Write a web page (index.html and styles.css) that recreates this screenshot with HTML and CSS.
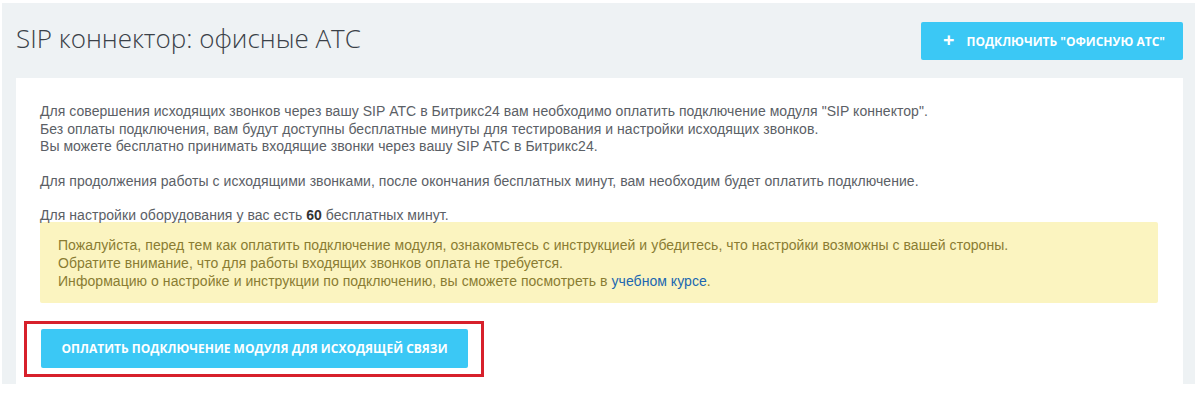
FILE: index.html
```html
<!DOCTYPE html>
<html lang="ru">
<head>
<meta charset="utf-8">
<link rel="stylesheet" href="styles.css">
</head>
<body>
<div class="page">
  <div class="header">
    <h1 class="title">SIP коннектор: офисные АТС</h1>
    <button class="btn btn-add"><span class="plus">+</span>ПОДКЛЮЧИТЬ "ОФИСНУЮ АТС"</button>
  </div>
  <div class="card">
    <p class="para">Для совершения исходящих звонков через вашу SIP АТС в Битрикс24 вам необходимо оплатить подключение модуля "SIP коннектор".<br>Без оплаты подключения, вам будут доступны бесплатные минуты для тестирования и настройки исходящих звонков.<br>Вы можете бесплатно принимать входящие звонки через вашу SIP АТС в Битрикс24.</p>
    <p class="para">Для продолжения работы с исходящими звонками, после окончания бесплатных минут, вам необходим будет оплатить подключение.</p>
    <p class="para para-last">Для настройки оборудования у вас есть <b>60</b> бесплатных минут.</p>
    <div class="notice">Пожалуйста, перед тем как оплатить подключение модуля, ознакомьтесь с инструкцией и убедитесь, что настройки возможны с вашей стороны.<br>Обратите внимание, что для работы входящих звонков оплата не требуется.<br>Информацию о настройке и инструкции по подключению, вы сможете посмотреть в <a class="link" href="#">учебном курсе</a>.</div>
    <div class="highlight">
      <button class="btn btn-pay">ОПЛАТИТЬ ПОДКЛЮЧЕНИЕ МОДУЛЯ ДЛЯ ИСХОДЯЩЕЙ СВЯЗИ</button>
    </div>
  </div>
</div>
</body>
</html>
```
FILE: styles.css
```css
html, body {
  margin: 0;
  padding: 0;
  background: #ffffff;
}
body {
  padding: 3px 5px 0 2px;
  font-family: Arial, "Liberation Sans", sans-serif;
}
.page {
  background: #eef2f4;
  padding: 0 12px 0 14px;
  height: 381px;
  overflow: hidden;
}
.header {
  display: flex;
  align-items: center;
  justify-content: space-between;
  height: 75px;
}
.title {
  margin: 0;
  font-family: "Open Sans", sans-serif;
  font-weight: 300;
  font-size: 26px;
  color: #3a4148;
  padding-bottom: 5px;
}
.btn {
  border: none;
  background: #3bc8f5;
  color: #ffffff;
  font-family: "Open Sans", sans-serif;
  font-weight: 700;
  font-size: 12px;
  border-radius: 2px;
  cursor: pointer;
}
.btn-add {
  height: 38px;
  width: 262px;
  margin-top: 1px;
  display: flex;
  align-items: center;
  justify-content: center;
  padding: 0 0 0 4px;
}
.plus {
  font-size: 20px;
  font-weight: 700;
  margin-right: 12px;
  line-height: 1;
  margin-top: -2px;
}
.card {
  background: #ffffff;
  padding: 25px 25px 40px 24px;
  min-height: 300px;
}
.para {
  margin: 0 0 17px;
  font-size: 14px;
  line-height: 17.5px;
  color: #5b6066;
  letter-spacing: 0.05px;
}
.para-last {
  margin-bottom: 0;
}
.para b {
  color: #333;
}
.notice {
  margin-top: -3px;
  background: #fbf4c0;
  padding: 14px 18px 13px;
  font-size: 14px;
  line-height: 18px;
  color: #8a7c32;
  border-radius: 2px;
  letter-spacing: 0.05px;
}
.link {
  color: #2067b0;
  text-decoration: none;
}
.highlight {
  display: inline-block;
  margin: 18px 0 0 -16px;
  border: 3px solid #d7202b;
  padding: 5px 13px 6px 14px;
}
.btn-pay {
  display: block;
  height: 39px;
  width: 427px;
  padding: 0;
}
```
